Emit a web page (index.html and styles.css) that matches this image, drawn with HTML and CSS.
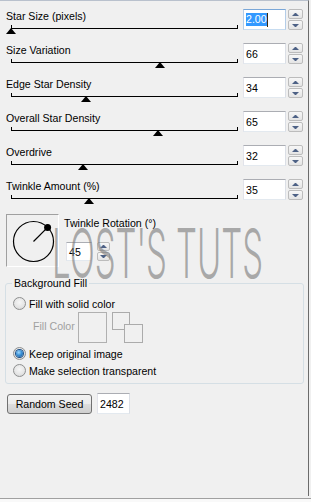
FILE: index.html
```html
<!DOCTYPE html>
<html>
<head>
<meta charset="utf-8">
<link rel="stylesheet" href="styles.css">
</head>
<body>
<div class="window">
  <div class="panel">
    <div class="row">
      <div class="ctl">
        <div class="lbl">Star Size (pixels)</div>
        <div class="slider"><span class="thumb" style="left:-6px"></span></div>
      </div>
      <div class="field focus"><span class="sel">2.00</span><span class="caret"></span></div>
      <div class="spin"><span class="btn up"></span><span class="btn dn"></span></div>
    </div>
    <div class="row">
      <div class="ctl">
        <div class="lbl">Size Variation</div>
        <div class="slider"><span class="thumb" style="left:143px"></span></div>
      </div>
      <div class="field">66</div>
      <div class="spin"><span class="btn up"></span><span class="btn dn"></span></div>
    </div>
    <div class="row">
      <div class="ctl">
        <div class="lbl">Edge Star Density</div>
        <div class="slider"><span class="thumb" style="left:69px"></span></div>
      </div>
      <div class="field">34</div>
      <div class="spin"><span class="btn up"></span><span class="btn dn"></span></div>
    </div>
    <div class="row">
      <div class="ctl">
        <div class="lbl">Overall Star Density</div>
        <div class="slider"><span class="thumb" style="left:141px"></span></div>
      </div>
      <div class="field">65</div>
      <div class="spin"><span class="btn up"></span><span class="btn dn"></span></div>
    </div>
    <div class="row">
      <div class="ctl">
        <div class="lbl">Overdrive</div>
        <div class="slider"><span class="thumb" style="left:66px"></span></div>
      </div>
      <div class="field">32</div>
      <div class="spin"><span class="btn up"></span><span class="btn dn"></span></div>
    </div>
    <div class="row">
      <div class="ctl">
        <div class="lbl">Twinkle Amount (%)</div>
        <div class="slider"><span class="thumb" style="left:72px"></span></div>
      </div>
      <div class="field">35</div>
      <div class="spin"><span class="btn up"></span><span class="btn dn"></span></div>
    </div>

    <div class="rot">
      <div class="dial">
        <svg width="51" height="51" viewBox="0 0 51 51">
          <circle cx="26.5" cy="26.5" r="20" fill="none" stroke="#000" stroke-width="1.2"/>
          <line x1="26.5" y1="26.5" x2="40.6" y2="12.4" stroke="#000" stroke-width="1.2"/>
          <circle cx="40.6" cy="12.4" r="3.5" fill="#000"/>
        </svg>
      </div>
      <div class="rotctl">
        <div class="lbl">Twinkle Rotation (°)</div>
        <div class="rotin">
          <div class="field small">45</div>
          <div class="spin small"><span class="btn up"></span><span class="btn dn"></span></div>
        </div>
      </div>
    </div>

    <fieldset class="group">
      <legend>Background Fill</legend>
      <div class="opt first"><span class="radio"></span>Fill with solid color</div>
      <div class="fillrow">
        <span class="dis">Fill Color</span>
        <span class="swatch"></span>
        <svg class="swap" width="31" height="31" viewBox="0 0 31 31">
          <rect x="0.5" y="0.5" width="17" height="17" fill="none" stroke="#ababab"/>
          <rect x="12.5" y="12.5" width="18" height="18" fill="#f0f0f0" stroke="#ababab"/>
        </svg>
      </div>
      <div class="opt"><span class="radio on"></span>Keep original image</div>
      <div class="opt"><span class="radio"></span>Make selection transparent</div>
    </fieldset>

    <div class="seed">
      <button class="push">Random Seed</button>
      <div class="field seedin">2482</div>
    </div>
  </div>
  <div class="bottom"></div>

  <div class="watermark">
    <svg width="250" height="72" viewBox="0 0 250 72">
      <text x="2" y="60" textLength="211" lengthAdjust="spacingAndGlyphs">LOST'S TUTS</text>
    </svg>
  </div>
</div>
</body>
</html>
```

FILE: styles.css
```css
html, body {
  margin: 0;
  padding: 0;
  background: #f0f0f0;
}
body {
  font-family: "Liberation Sans", Arial, sans-serif;
  font-size: 10.6px;
  color: #000;
}
.window {
  position: relative;
  width: 311px;
  height: 502px;
  background: #f0f0f0;
  overflow: hidden;
}
.panel {
  box-sizing: border-box;
  width: 309px;
  height: 496px;
  border-top: 1px solid #b9c1cd;
  border-right: 1px solid #6b6b6b;
  padding-top: 2px;
}
.bottom {
  margin-top: 2px;
  height: 4px;
  border-top: 1px solid #a0a0a0;
  background: #f9f9f9;
}

/* slider rows */
.row {
  display: flex;
  height: 34px;
}
.ctl {
  box-sizing: border-box;
  width: 243px;
  padding-left: 6px;
}
.lbl {
  margin-top: 7px;
  height: 13px;
  line-height: 13px;
  white-space: nowrap;
}
.slider {
  position: relative;
  margin: 2px 0 0 5px;
  width: 225px;
  height: 3px;
  border: 1px solid #000;
  border-top: 0;
}
.thumb {
  position: absolute;
  top: 3px;
  width: 0;
  height: 0;
  border-left: 5px solid transparent;
  border-right: 5px solid transparent;
  border-bottom: 6px solid #000;
}

/* text fields */
.field {
  box-sizing: border-box;
  margin-top: 6px;
  width: 43px;
  height: 21px;
  border: 1px solid;
  border-color: #abadb3 #dbdfe6 #e3e9ef #e2e3ea;
  background: #fff;
  padding-left: 2px;
  display: flex;
  align-items: center;
  white-space: nowrap;
}
.field.focus {
  border-color: #7aa7d8 #b4cde8 #c7dcf0 #b4cde8;
}
.sel {
  background: #3399ff;
  color: #fff;
  line-height: 13px;
}
.caret {
  display: inline-block;
  width: 1px;
  height: 14px;
  background: #3a2a10;
}

/* spinners */
.spin {
  box-sizing: border-box;
  margin: 6px 0 0 2px;
  width: 15px;
  height: 21px;
  display: flex;
  flex-direction: column;
  gap: 1px;
}
.btn {
  flex: 1;
  box-sizing: border-box;
  border: 1px solid #bcbcbc;
  border-radius: 2px;
  background: linear-gradient(#f7f7f7, #e4e4e4);
  display: flex;
  align-items: center;
  justify-content: center;
}
.btn::after {
  content: "";
  width: 1px;
  height: 0;
  border-left: 3px solid transparent;
  border-right: 3px solid transparent;
}
.up::after {
  border-bottom: 3px solid #4d6185;
}
.dn::after {
  border-top: 3px solid #4d6185;
}

/* rotation */
.rot {
  display: flex;
  margin-top: 7px;
  height: 53px;
}
.dial {
  box-sizing: border-box;
  margin-left: 6px;
  width: 53px;
  height: 53px;
  border: 1px solid;
  border-color: #a0a0a0 #ffffff #ffffff #a0a0a0;
}
.dial svg {
  display: block;
}
.rotctl {
  margin-left: 5px;
}
.rotctl .lbl {
  margin-top: 3px;
}
.rotin {
  display: flex;
  margin-top: 12px;
  margin-left: 2px;
}
.field.small {
  margin-top: 0;
  width: 26px;
  height: 19px;
}
.spin.small {
  margin: 0 0 0 5px;
  width: 13px;
  height: 19px;
}

/* group box */
.group {
  box-sizing: border-box;
  margin: 10px 0 0 5px;
  width: 299px;
  padding: 0 0 6px 0;
  border: 1px solid #d5dfe5;
  border-radius: 3px;
  min-inline-size: 0;
}
.group legend {
  margin-left: 6px;
  padding: 0 2px;
  line-height: 13px;
}
.opt {
  display: flex;
  align-items: center;
  height: 13px;
  padding-left: 7px;
  margin-top: 4px;
  white-space: nowrap;
}
.opt.first {
  margin-top: 7px;
}
.radio {
  box-sizing: border-box;
  width: 13px;
  height: 13px;
  margin-right: 3px;
  border-radius: 50%;
  border: 1px solid #8e8f8f;
  background: radial-gradient(circle at 50% 40%, #f6f6f6 0%, #e6e6e6 55%, #cfcfcf 100%);
  display: flex;
  align-items: center;
  justify-content: center;
}
.radio.on::after {
  content: "";
  width: 7px;
  height: 7px;
  border-radius: 50%;
  background: radial-gradient(circle at 40% 35%, #9fd8ff 0%, #3b91d6 45%, #17508f 100%);
  box-shadow: 0 0 0 1px #1d4f86;
}
.fillrow {
  display: flex;
  align-items: center;
  margin-top: 2px;
  height: 31px;
}
.dis {
  margin-left: 27px;
  width: 45px;
  color: #a0a0a0;
  line-height: 13px;
  margin-bottom: 3px;
}
.swatch {
  box-sizing: border-box;
  width: 29px;
  height: 31px;
  border: 1px solid #b0b0b0;
}
.swap {
  display: block;
  margin-left: 5px;
}

/* seed */
.seed {
  display: flex;
  align-items: center;
  margin-top: 9px;
  height: 21px;
}
.push {
  box-sizing: border-box;
  margin: 0 0 0 7px;
  width: 85px;
  height: 20px;
  padding: 0;
  border: 1px solid #707070;
  border-radius: 3px;
  background: linear-gradient(#f2f2f2 0%, #ebebeb 50%, #dddddd 51%, #cfcfcf 100%);
  font: inherit;
  color: #000;
}
.field.seedin {
  margin: 0 0 0 5px;
  width: 33px;
  height: 21px;
}

/* watermark overlay */
.watermark {
  position: absolute;
  left: 50px;
  top: 218px;
  pointer-events: none;
}
.watermark svg {
  display: block;
}
.watermark text {
  font-family: Inter, "Noto Sans", sans-serif;
  font-weight: 300;
  font-size: 69px;
  fill: rgba(120, 120, 120, 0.6);
}
```
